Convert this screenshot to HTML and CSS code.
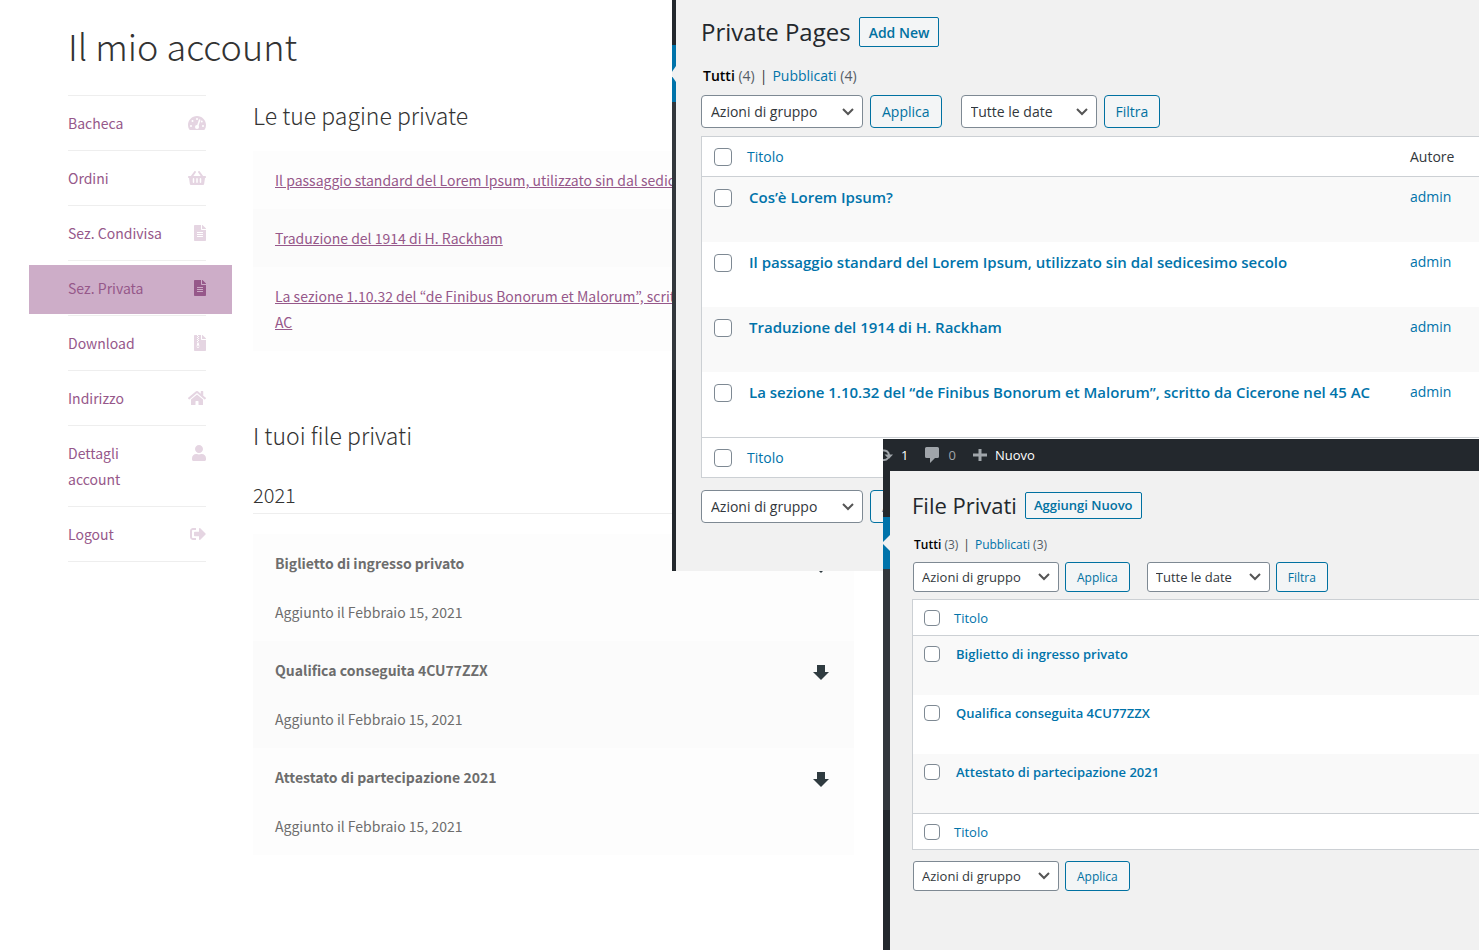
FILE: index.html
```html
<!DOCTYPE html>
<html lang="it">
<head>
<meta charset="utf-8">
<title>Il mio account</title>
<link rel="stylesheet" href="styles.css">
</head>
<body>
<main class="account">
  <h1 class="account-title">Il mio account</h1>
  <div class="account-columns">
    <nav class="account-nav" aria-label="Account">
      <ul class="nav-list">
        <li class="nav-item"><a class="nav-link" href="#"><span class="nav-label">Bacheca</span><svg class="nav-icon" width="18" height="16" viewBox="0 0 576 512"><path fill="currentColor" d="M288 32C128.940 32 0 160.940 0 320c0 52.800 14.250 102.260 39.060 144.800 5.610 9.620 16.300 15.200 27.440 15.200h443c11.140 0 21.830-5.580 27.440-15.200C561.750 422.260 576 372.800 576 320c0-159.060-128.940-288-288-288z"/><g fill="#fff"><circle cx="288" cy="128" r="32"/><circle cx="144" cy="192" r="32"/><circle cx="96" cy="352" r="32"/><circle cx="480" cy="352" r="32"/><circle cx="440" cy="208" r="32"/><circle cx="288" cy="384" r="64"/><path d="M354 136l46 15-76 238-48-12z"/></g></svg></a></li>
        <li class="nav-item"><a class="nav-link" href="#"><span class="nav-label">Ordini</span><svg class="nav-icon" width="18" height="16" viewBox="0 0 576 512"><path fill="currentColor" d="M576 216v16c0 13.255-10.745 24-24 24h-8l-26.113 182.788C514.509 462.435 494.257 480 470.370 480H105.630c-23.887 0-44.139-17.565-47.518-41.212L32 256h-8c-13.255 0-24-10.745-24-24v-16c0-13.255 10.745-24 24-24h67.341l106.780-146.821c10.395-14.292 30.407-17.453 44.701-7.058 14.293 10.395 17.453 30.408 7.058 44.701L170.477 192h235.046L326.120 82.821c-10.395-14.292-7.234-34.306 7.059-44.701 14.291-10.395 34.306-7.235 44.701 7.058L484.659 192H552c13.255 0 24 10.745 24 24zM312 392V280c0-13.255-10.745-24-24-24s-24 10.745-24 24v112c0 13.255 10.745 24 24 24s24-10.745 24-24zm112 0V280c0-13.255-10.745-24-24-24s-24 10.745-24 24v112c0 13.255 10.745 24 24 24s24-10.745 24-24zm-224 0V280c0-13.255-10.745-24-24-24s-24 10.745-24 24v112c0 13.255 10.745 24 24 24s24-10.745 24-24z"/></svg></a></li>
        <li class="nav-item"><a class="nav-link" href="#"><span class="nav-label">Sez. Condivisa</span><svg class="nav-icon" width="12" height="16" viewBox="0 0 384 512"><path fill="currentColor" d="M224 136V0H24C10.700 0 0 10.700 0 24v464c0 13.300 10.700 24 24 24h336c13.300 0 24-10.700 24-24V160H248c-13.200 0-24-10.800-24-24zm64 236c0 6.600-5.400 12-12 12H108c-6.600 0-12-5.400-12-12v-8c0-6.600 5.400-12 12-12h168c6.600 0 12 5.400 12 12v8zm0-64c0 6.600-5.400 12-12 12H108c-6.600 0-12-5.400-12-12v-8c0-6.600 5.400-12 12-12h168c6.600 0 12 5.400 12 12v8zm0-72v8c0 6.600-5.400 12-12 12H108c-6.600 0-12-5.400-12-12v-8c0-6.600 5.400-12 12-12h168c6.600 0 12 5.400 12 12zm96-114.100v6.100H256V0h6.100c6.400 0 12.500 2.500 17 7l97.900 98c4.500 4.500 7 10.600 7 16.900z"/></svg></a></li>
        <li class="nav-item"><a class="nav-link nav-link-active" href="#" aria-current="page"><span class="nav-label">Sez. Privata</span><svg class="nav-icon" width="12" height="16" viewBox="0 0 384 512"><path fill="currentColor" d="M224 136V0H24C10.700 0 0 10.700 0 24v464c0 13.300 10.700 24 24 24h336c13.300 0 24-10.700 24-24V160H248c-13.200 0-24-10.800-24-24zm64 236c0 6.600-5.400 12-12 12H108c-6.600 0-12-5.400-12-12v-8c0-6.600 5.400-12 12-12h168c6.600 0 12 5.400 12 12v8zm0-64c0 6.600-5.400 12-12 12H108c-6.600 0-12-5.400-12-12v-8c0-6.600 5.400-12 12-12h168c6.600 0 12 5.400 12 12v8zm0-72v8c0 6.600-5.400 12-12 12H108c-6.600 0-12-5.400-12-12v-8c0-6.600 5.400-12 12-12h168c6.600 0 12 5.400 12 12zm96-114.100v6.100H256V0h6.100c6.400 0 12.500 2.500 17 7l97.900 98c4.500 4.500 7 10.600 7 16.900z"/></svg></a></li>
        <li class="nav-item"><a class="nav-link" href="#"><span class="nav-label">Download</span><svg class="nav-icon" width="12" height="16" viewBox="0 0 384 512"><path fill="currentColor" d="M224 136V0H24C10.700 0 0 10.700 0 24v464c0 13.300 10.700 24 24 24h336c13.300 0 24-10.700 24-24V160H248c-13.200 0-24-10.800-24-24zM384 122v6H256V0h6c6 0 13 3 17 7l98 98c5 5 7 11 7 17z"/><g fill="#fff"><path d="M96 0h32v32H96zM128 32h32v32h-32zM96 64h32v32H96zM128 96h32v32h-32zM96 128h32v32H96zM128 160h32v32h-32zM96 192h32v32H96z"/><path fill-rule="evenodd" d="M108 236h40l20 100c12 58-22 80-40 80s-52-22-40-80zM128 336c-18 0-32 11-32 25s14 25 32 25 32-11 32-25-14-25-32-25z"/></g></svg></a></li>
        <li class="nav-item"><a class="nav-link" href="#"><span class="nav-label">Indirizzo</span><svg class="nav-icon" width="18" height="16" viewBox="0 0 576 512"><path fill="currentColor" d="M280.370 148.260L96 300.110V464a16 16 0 0 0 16 16l112.060-.290a16 16 0 0 0 15.920-16V368a16 16 0 0 1 16-16h64a16 16 0 0 1 16 16v95.640a16 16 0 0 0 16 16.050L464 480a16 16 0 0 0 16-16V300L295.670 148.260a12.190 12.190 0 0 0-15.300 0zM571.600 251.470L488 182.560V44.050a12 12 0 0 0-12-12h-56a12 12 0 0 0-12 12v72.610L318.470 43a48 48 0 0 0-61 0L4.340 251.470a12 12 0 0 0-1.600 16.900l25.500 31A12 12 0 0 0 45.150 301l235.220-193.740a12.190 12.190 0 0 1 15.300 0L530.900 301a12 12 0 0 0 16.900-1.600l25.500-31a12 12 0 0 0-1.700-16.930z"/></svg></a></li>
        <li class="nav-item"><a class="nav-link" href="#"><span class="nav-label">Dettagli account</span><svg class="nav-icon" width="14" height="16" viewBox="0 0 448 512"><path fill="currentColor" d="M224 256c70.700 0 128-57.300 128-128S294.700 0 224 0 96 57.300 96 128s57.300 128 128 128zm89.600 32h-16.700c-22.200 10.200-46.900 16-72.900 16s-50.600-5.800-72.900-16h-16.700C60.200 288 0 348.200 0 422.400V464c0 26.500 21.500 48 48 48h352c26.500 0 48-21.500 48-48v-41.600c0-74.200-60.200-134.400-134.400-134.400z"/></svg></a></li>
        <li class="nav-item"><a class="nav-link" href="#"><span class="nav-label">Logout</span><svg class="nav-icon" width="16" height="16" viewBox="0 0 512 512"><path fill="currentColor" d="M497 273L329 441c-15 15-41 4.500-41-17v-96H152c-13.300 0-24-10.700-24-24v-96c0-13.300 10.700-24 24-24h136V88c0-21.400 25.900-32 41-17l168 168c9.300 9.400 9.300 24.600 0 34zM192 436v-40c0-6.600-5.400-12-12-12H96c-17.700 0-32-14.300-32-32V160c0-17.700 14.300-32 32-32h84c6.600 0 12-5.400 12-12V76c0-6.600-5.400-12-12-12H96c-53 0-96 43-96 96v192c0 53 43 96 96 96h84c6.600 0 12-5.400 12-12z"/></svg></a></li>
      </ul>
    </nav>
    <div class="account-content">
      <section class="pages">
        <h2 class="section-title">Le tue pagine private</h2>
        <ul class="page-list">
          <li class="page-row"><a class="page-link" href="#">Il passaggio standard del Lorem Ipsum, utilizzato sin dal sedicesimo secolo</a></li>
          <li class="page-row"><a class="page-link" href="#">Traduzione del 1914 di H. Rackham</a></li>
          <li class="page-row"><a class="page-link" href="#">La sezione 1.10.32 del “de Finibus Bonorum et Malorum”, scritto da Cicerone nel 45 AC</a></li>
        </ul>
      </section>
      <section class="files">
        <h2 class="section-title">I tuoi file privati</h2>
        <h3 class="year-title">2021</h3>
        <ul class="file-list">
          <li class="file-row">
            <div class="file-text"><strong class="file-name">Biglietto di ingresso privato</strong><span class="file-date">Aggiunto il Febbraio 15, 2021</span></div>
            <a class="file-download" href="#" aria-label="Scarica"><svg width="16" height="16" viewBox="0 0 16 16"><path fill="currentColor" d="M4 0h8v7h4l-8 8-8-8h4z"/></svg></a>
          </li>
          <li class="file-row">
            <div class="file-text"><strong class="file-name">Qualifica conseguita 4CU77ZZX</strong><span class="file-date">Aggiunto il Febbraio 15, 2021</span></div>
            <a class="file-download" href="#" aria-label="Scarica"><svg width="16" height="16" viewBox="0 0 16 16"><path fill="currentColor" d="M4 0h8v7h4l-8 8-8-8h4z"/></svg></a>
          </li>
          <li class="file-row">
            <div class="file-text"><strong class="file-name">Attestato di partecipazione 2021</strong><span class="file-date">Aggiunto il Febbraio 15, 2021</span></div>
            <a class="file-download" href="#" aria-label="Scarica"><svg width="16" height="16" viewBox="0 0 16 16"><path fill="currentColor" d="M4 0h8v7h4l-8 8-8-8h4z"/></svg></a>
          </li>
        </ul>
      </section>
    </div>
  </div>
</main>

<section class="window window-pages">
  <div class="menu-edge menu-edge-pages"><span class="menu-current"><svg class="menu-notch" viewBox="0 0 4 14" preserveAspectRatio="none"><path fill="#f1f1f1" d="M4 0v14L0 9V5z"/></svg></span></div>
  <div class="admin">
    <header class="admin-head"><h2 class="admin-title">Private Pages</h2><button class="btn btn-add" type="button">Add New</button></header>
    <p class="views"><a class="view-current" href="#">Tutti</a> <span class="count">(4)</span><span class="divider">|</span><a class="link" href="#">Pubblicati</a> <span class="count">(4)</span></p>
    <div class="toolbar">
      <select class="select select-bulk" aria-label="Azioni di gruppo"><option>Azioni di gruppo</option></select>
      <button class="btn" type="button">Applica</button>
      <select class="select select-date" aria-label="Filtra per data"><option>Tutte le date</option></select>
      <button class="btn" type="button">Filtra</button>
    </div>
    <table class="items">
      <thead><tr><th class="cell-check"><input class="check" type="checkbox" aria-label="Seleziona tutto"></th><th class="cell-head"><a class="link" href="#">Titolo</a></th><th class="cell-author">Autore</th></tr></thead>
      <tbody>
        <tr><td class="cell-check"><input class="check" type="checkbox" aria-label="Cos’è Lorem Ipsum?"></td><td class="cell-title"><a class="link" href="#">Cos’è Lorem Ipsum?</a></td><td class="cell-author"><a class="link" href="#">admin</a></td></tr>
        <tr><td class="cell-check"><input class="check" type="checkbox" aria-label="Il passaggio standard"></td><td class="cell-title"><a class="link" href="#">Il passaggio standard del Lorem Ipsum, utilizzato sin dal sedicesimo secolo</a></td><td class="cell-author"><a class="link" href="#">admin</a></td></tr>
        <tr><td class="cell-check"><input class="check" type="checkbox" aria-label="Traduzione del 1914"></td><td class="cell-title"><a class="link" href="#">Traduzione del 1914 di H. Rackham</a></td><td class="cell-author"><a class="link" href="#">admin</a></td></tr>
        <tr><td class="cell-check"><input class="check" type="checkbox" aria-label="La sezione 1.10.32"></td><td class="cell-title"><a class="link" href="#">La sezione 1.10.32 del “de Finibus Bonorum et Malorum”, scritto da Cicerone nel 45 AC</a></td><td class="cell-author"><a class="link" href="#">admin</a></td></tr>
      </tbody>
      <tfoot><tr><th class="cell-check"><input class="check" type="checkbox" aria-label="Seleziona tutto"></th><th class="cell-head"><a class="link" href="#">Titolo</a></th><th class="cell-author"></th></tr></tfoot>
    </table>
    <div class="toolbar toolbar-bottom">
      <select class="select select-bulk" aria-label="Azioni di gruppo"><option>Azioni di gruppo</option></select>
      <button class="btn" type="button">Applica</button>
    </div>
  </div>
</section>

<section class="window window-files">
  <div class="adminbar">
    <a class="bar-item bar-update" href="#"><svg width="10" height="14" viewBox="0 0 10 14"><path fill="none" stroke="#a0a5aa" stroke-width="2" d="M0 2.500A5 5 0 0 1 6 7M0 12A5 5 0 0 0 5 10"/><path fill="#a0a5aa" d="M1.500 6.500h8.500l-4.200 4.500z"/></svg><span>1</span></a>
    <a class="bar-item bar-comments" href="#"><svg width="14" height="16" viewBox="0 0 14 16"><path fill="#a0a5aa" d="M1.500 0h11Q14 0 14 1.500v8q0 1.500-1.500 1.500H10l-5 5v-5H1.500Q0 11 0 9.500v-8Q0 0 1.500 0z"/></svg><span>0</span></a>
    <a class="bar-item" href="#"><svg width="14" height="14" viewBox="0 0 14 14"><path fill="#a0a5aa" d="M5.500 1h3v4.500H14v3H8.500V13h-3V8.500H0v-3h5.500z"/></svg><span>Nuovo</span></a>
  </div>
  <div class="window-body">
    <div class="menu-edge menu-edge-files"><span class="menu-current"><svg class="menu-notch" viewBox="0 0 7 16" preserveAspectRatio="none"><path fill="#f1f1f1" d="M7 0v16L0 9V7z"/></svg></span></div>
    <div class="admin">
      <header class="admin-head"><h2 class="admin-title">File Privati</h2><button class="btn btn-add" type="button">Aggiungi Nuovo</button></header>
      <p class="views"><a class="view-current" href="#">Tutti</a> <span class="count">(3)</span><span class="divider">|</span><a class="link" href="#">Pubblicati</a> <span class="count">(3)</span></p>
      <div class="toolbar">
        <select class="select select-bulk" aria-label="Azioni di gruppo"><option>Azioni di gruppo</option></select>
        <button class="btn" type="button">Applica</button>
        <select class="select select-date" aria-label="Filtra per data"><option>Tutte le date</option></select>
        <button class="btn" type="button">Filtra</button>
      </div>
      <table class="items">
        <thead><tr><th class="cell-check"><input class="check" type="checkbox" aria-label="Seleziona tutto"></th><th class="cell-head"><a class="link" href="#">Titolo</a></th></tr></thead>
        <tbody>
          <tr><td class="cell-check"><input class="check" type="checkbox" aria-label="Biglietto di ingresso privato"></td><td class="cell-title"><a class="link" href="#">Biglietto di ingresso privato</a></td></tr>
          <tr><td class="cell-check"><input class="check" type="checkbox" aria-label="Qualifica conseguita 4CU77ZZX"></td><td class="cell-title"><a class="link" href="#">Qualifica conseguita 4CU77ZZX</a></td></tr>
          <tr><td class="cell-check"><input class="check" type="checkbox" aria-label="Attestato di partecipazione 2021"></td><td class="cell-title"><a class="link" href="#">Attestato di partecipazione 2021</a></td></tr>
        </tbody>
        <tfoot><tr><th class="cell-check"><input class="check" type="checkbox" aria-label="Seleziona tutto"></th><th class="cell-head"><a class="link" href="#">Titolo</a></th></tr></tfoot>
      </table>
      <div class="toolbar toolbar-bottom">
        <select class="select select-bulk" aria-label="Azioni di gruppo"><option>Azioni di gruppo</option></select>
        <button class="btn" type="button">Applica</button>
      </div>
    </div>
  </div>
</section>
</body>
</html>
```

FILE: styles.css
```css
* {
  box-sizing: border-box;
}

body {
  margin: 0;
  min-height: 100vh;
  position: relative;
  overflow-x: hidden;
  background: #fff;
  color: #6d6d6d;
  font-family: "Noto Sans CJK KR", "Open Sans", sans-serif;
  font-size: 14px;
  line-height: 26px;
}

h1, h2, h3, ul, p {
  margin: 0;
  padding: 0;
}

ul {
  list-style: none;
}

a {
  text-decoration: none;
}

svg {
  display: block;
  flex: none;
}

/* Account page */
.account {
  max-width: 854px;
  padding: 20px 0 0 68px;
}

.account-title {
  margin-bottom: 25px;
  color: #333;
  font-size: 36px;
  font-weight: 300;
  line-height: 50px;
}

.account-columns {
  display: grid;
  grid-template-columns: 138px 1fr;
  gap: 47px;
}

.nav-list {
  border-top: 1px solid #eee;
}

.nav-item {
  border-bottom: 1px solid #eee;
}

.nav-link {
  display: flex;
  justify-content: space-between;
  gap: 20px;
  padding: 14px 0;
  color: #96588a;
}

.nav-icon {
  margin-top: 5px;
  color: #e5d5e2;
}

.nav-link-active {
  margin: 0 -26px 0 -39px;
  padding: 10px 26px 13px 39px;
  border-top: 4px solid #fff;
  border-bottom: 1px solid #fff;
  background: #cdadc8;
}

.nav-link-active .nav-icon {
  color: #96588a;
}

.section-title {
  color: #333;
  font-size: 23px;
  font-weight: 300;
  line-height: 40px;
}

.page-list {
  margin: 16px 0 64px;
}

.page-row {
  padding: 16px 40px 16px 22px;
  background: #fdfdfd;
}

.page-row:nth-child(even) {
  background: #fbfbfb;
}

.page-link {
  color: #96588a;
  text-decoration: underline;
}

.year-title {
  margin: 22px 0 20px;
  border-bottom: 1px solid #eee;
  color: #333;
  font-size: 20px;
  font-weight: 300;
  line-height: 36px;
}

.file-row {
  display: flex;
  justify-content: space-between;
  padding: 16px 25px 16px 22px;
  background: #fdfdfd;
}

.file-row:nth-child(even) {
  background: #fbfbfb;
}

.file-text {
  display: flex;
  flex-direction: column;
  gap: 23px;
}

.file-name {
  font-weight: 700;
}

.file-download {
  padding-top: 8px;
  color: #2f3b40;
}

/* Overlapping admin windows */
.window {
  position: absolute;
  right: 0;
  background: #f1f1f1;
  color: #32373c;
  font-family: "Open Sans", "Noto Sans", sans-serif;
}

.window-pages {
  --text: 14px;
  --title: 24px;
  --control: 33px;
  --check: 18px;
  --radius: 4px;
  top: 0;
  left: 672px;
  display: flex;
  padding-bottom: 48px;
  background: linear-gradient(to right, #23282d 4px, #f1f1f1 4px);
}

.window-files {
  --text: 13px;
  --title: 22px;
  --control: 30px;
  --check: 16px;
  --radius: 3px;
  top: 439px;
  bottom: 0;
  left: 883px;
  display: flex;
  flex-direction: column;
}

.window-body {
  flex: 1;
  display: flex;
}

.menu-edge {
  flex: none;
  background: #23282d;
}

.menu-edge-pages {
  width: 4px;
  padding-top: 45px;
  background: linear-gradient(#23282d 102px, #32373c 102px, #32373c 370px, #23282d 370px);
}

.menu-edge-files {
  width: 7px;
  padding-top: 46px;
  background: linear-gradient(#23282d 98px, #32373c 98px, #32373c 339px, #23282d 339px);
}

.menu-current {
  display: flex;
  align-items: center;
  height: 52px;
  background: #0073aa;
}

.menu-edge-pages .menu-current {
  height: 57px;
}

.menu-notch {
  width: 100%;
  height: 16px;
}

.adminbar {
  display: flex;
  gap: 17px;
  height: 32px;
  overflow: hidden;
  background: #23282d;
  font-size: 13px;
}

.bar-item {
  display: flex;
  align-items: center;
  gap: 8px;
  color: #fff;
}

.bar-comments {
  gap: 9px;
  color: #a0a5aa;
}

.admin {
  flex: 1;
  min-width: 0;
  padding: 13px 0 0 25px;
  font-size: var(--text);
}

.window-files .admin {
  padding: 17px 0 0 22px;
}

.admin-head {
  display: flex;
  align-items: center;
  gap: 8px;
}

.admin-title {
  color: #23282d;
  font-size: var(--title);
  font-weight: 400;
  line-height: 38px;
  white-space: nowrap;
}

.window-files .admin-title {
  line-height: 34px;
}

.btn {
  height: var(--control);
  padding: 0 11px;
  border: 1px solid #0071a1;
  border-radius: var(--radius);
  background: #f3f5f6;
  color: #0071a1;
  font-family: inherit;
  font-size: var(--text);
  white-space: nowrap;
}

.window-files .btn {
  font-size: 12px;
}

.btn-add,
.window-files .btn-add {
  height: 30px;
  padding: 0 9px;
  border-radius: 2px;
  font-size: 14px;
  font-weight: 600;
}

.window-files .btn-add {
  height: 27px;
  padding: 0 8px;
  font-size: 13px;
}

.views {
  margin: 12px 0 6px 2px;
  line-height: 26px;
}

.window-files .views {
  margin: 10px 0 4px 2px;
  font-size: 12px;
}

.view-current {
  color: #000;
  font-weight: 600;
}

.count {
  color: #555d66;
}

.divider {
  margin: 0 5px;
}

.link {
  color: #0073aa;
}

.toolbar {
  display: flex;
  gap: 7px;
  margin-bottom: 8px;
}

.window-files .toolbar {
  gap: 6px;
  margin-bottom: 7px;
  padding-left: 1px;
}

.toolbar-bottom,
.window-files .toolbar-bottom {
  margin: 12px 0 0;
}

.window-files .toolbar-bottom {
  margin-top: 11px;
}

.select {
  height: var(--control);
  padding: 0 24px 0 9px;
  border: 1px solid #7e8993;
  border-radius: var(--radius);
  appearance: none;
  background: #fff url("data:image/svg+xml,%3Csvg xmlns='http://www.w3.org/2000/svg' viewBox='0 0 12 8'%3E%3Cpath d='M1 1l5 5 5-5' fill='none' stroke='%23555' stroke-width='2'/%3E%3C/svg%3E") no-repeat right 8px center / 12px 8px;
  color: #32373c;
  font-family: inherit;
  font-size: var(--text);
}

.select-bulk {
  width: 162px;
}

.select-date {
  width: 136px;
  margin-left: 12px;
}

.window-files .select {
  padding-left: 8px;
}

.window-files .select-bulk {
  width: 146px;
}

.window-files .select-date {
  width: 123px;
  margin-left: 11px;
}

.items {
  width: 100%;
  border: 1px solid #ccd0d4;
  border-right: 0;
  border-spacing: 0;
  background: #fff;
}

.items th,
.items td {
  padding: 0;
  font-weight: 400;
  text-align: left;
}

.items th {
  height: 40px;
}

.items td {
  height: 65px;
  padding-top: 7px;
  vertical-align: top;
}

.window-files .items th {
  height: 36px;
}

.window-files .items td {
  height: 59px;
  padding-top: 5px;
}

.items thead th {
  border-bottom: 1px solid #ccd0d4;
}

.items tfoot th {
  border-top: 1px solid #ccd0d4;
}

.items tbody tr:nth-child(odd) {
  background: #f9f9f9;
}

.items .cell-check {
  width: 45px;
  padding-left: 12px;
}

.window-files .items .cell-check {
  width: 41px;
  padding-left: 11px;
}

.items .cell-title {
  padding-left: 2px;
  font-weight: 600;
}

.window-pages .cell-title {
  font-size: 15px;
}

.items .cell-author {
  width: 69px;
}

.check {
  display: block;
  width: var(--check);
  height: var(--check);
  margin: 0;
  border: 1px solid #7e8993;
  border-radius: 4px;
  appearance: none;
  background: #fff;
}

td .check {
  margin-top: 5px;
}
```
